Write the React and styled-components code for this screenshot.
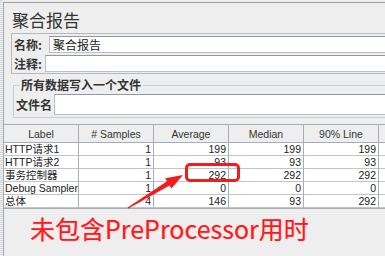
import styled, { createGlobalStyle } from "styled-components";

const GlobalStyle = createGlobalStyle`
  html, body {
    margin: 0;
    padding: 0;
    background: #eeeeee;
    overflow: hidden;
  }
  body {
    font-family: "Liberation Sans", "Noto Sans CJK SC", sans-serif;
  }
`;

const Frame = styled.div`
  position: relative;
  display: flex;
  align-items: flex-start;
  width: 385px;
  height: 256px;
  overflow: hidden;
  background: #eeeeee;
`;

const Splitter = styled.div`
  width: 3px;
  height: 256px;
  flex: none;
  background: repeating-linear-gradient(
    to bottom,
    #d4d6da 0px,
    #d4d6da 1px,
    #f2f2f2 1px,
    #f2f2f2 2px
  );
`;

const Main = styled.div`
  flex: none;
  width: 440px;
  height: 260px;
  border-left: 1px solid #a4a8b0;
  border-top: 1px solid #9aa0a8;
  margin-top: 2px;
`;

const Title = styled.div`
  height: 30px;
  padding-left: 8px;
  font-family: "Noto Sans CJK SC", sans-serif;
  font-size: 17px;
  line-height: 33px;
  color: #333333;
`;

const NameBox = styled.div`
  margin-left: 7px;
  border: 1px solid #b4b8c0;
  padding: 2px 0 1px 2px;
  display: flex;
  flex-direction: column;
  gap: 2px;
`;

const FieldRow = styled.div`
  display: flex;
  align-items: center;
`;

const FieldLabel = styled.span`
  width: ${(p) => p.$w}px;
  flex: none;
  white-space: nowrap;
  font-family: "Noto Sans CJK SC", sans-serif;
  font-size: 12px;
  line-height: 14px;
  font-weight: 700;
  color: #333333;
`;

const TextBox = styled.div`
  flex: 1;
  height: ${(p) => p.$h}px;
  box-sizing: border-box;
  background: #ffffff;
  border: 1px solid #b8c0cc;
  border-top-color: #8e98a6;
  padding-left: 3px;
  font-family: "Noto Sans CJK SC", sans-serif;
  font-size: 12px;
  line-height: ${(p) => p.$h - 2}px;
  color: #222222;
`;

const FileSet = styled.fieldset`
  margin: 4px 0 0 9px;
  padding: 1px 0 2px 2px;
  border: 1px solid #c8ccd4;
  border-right: none;
`;

const Legend = styled.legend`
  padding: 0 2px;
  margin-left: 3px;
  font-family: "Noto Sans CJK SC", sans-serif;
  font-size: 12px;
  font-weight: 700;
  line-height: 14px;
  color: #333333;
`;

const FileRow = styled(FieldRow)`
  margin-top: 1px;
`;

const Table = styled.div`
  margin-top: 6px;
  display: grid;
  grid-template-columns: repeat(6, 75px);
  border-top: 1px solid #a8acb4;
  border-bottom: 1px solid #a8acb4;
  font-size: 10.5px;
  color: #222222;
`;

const HeadCell = styled.div`
  height: 17px;
  line-height: 18px;
  text-align: center;
  background: #eeeeee;
  border-right: 1px solid #a8acb4;
  border-bottom: 1px solid #a8acb4;
  color: #333333;
`;

const Cell = styled.div`
  height: 12px;
  line-height: 13px;
  background: #ffffff;
  border-right: 1px solid #a8acb4;
  border-bottom: 1px solid #c0c4cc;
  padding: 0 2px 0 1px;
  text-align: ${(p) => (p.$num ? "right" : "left")};
  font-family: "Liberation Sans", "Noto Sans CJK SC", sans-serif;
  white-space: nowrap;
  overflow: hidden;
`;

const Note = styled.div`
  margin: 3px 0 0 26px;
  font-family: "Noto Sans CJK SC", sans-serif;
  font-size: 25px;
  line-height: 32px;
  color: #ff1a1a;
  text-shadow: 0 0 1px #ff9ab0;
`;

const Highlight = styled.div`
  position: absolute;
  left: 185px;
  top: 163px;
  width: 55px;
  height: 19px;
  box-sizing: border-box;
  border: 3px solid #f21c1c;
  border-radius: 5px;
`;

const ArrowLayer = styled.svg`
  position: absolute;
  left: 0;
  top: 0;
  pointer-events: none;
`;

const headers = ["Label", "# Samples", "Average", "Median", "90% Line", ""];

const rows = [
  ["HTTP请求1", "1", "199", "199", "199", ""],
  ["HTTP请求2", "1", "93", "93", "93", ""],
  ["事务控制器", "1", "292", "292", "292", ""],
  ["Debug Sampler", "1", "0", "0", "0", ""],
  ["总体", "4", "146", "93", "292", ""],
];

const App = () => {
  return (
    <Frame>
      <GlobalStyle />
      <Splitter />
      <Main>
        <Title>聚合报告</Title>
        <NameBox>
          <FieldRow>
            <FieldLabel $w={35}>名称:</FieldLabel>
            <TextBox $h={17}>聚合报告</TextBox>
          </FieldRow>
          <FieldRow>
            <FieldLabel $w={31}>注释:</FieldLabel>
            <TextBox $h={17} />
          </FieldRow>
        </NameBox>
        <FileSet>
          <Legend>所有数据写入一个文件</Legend>
          <FileRow>
            <FieldLabel $w={38}>文件名</FieldLabel>
            <TextBox $h={21} />
          </FileRow>
        </FileSet>
        <Table>
          {headers.map((h, i) => (
            <HeadCell key={i}>{h}</HeadCell>
          ))}
          {rows.map((r, ri) =>
            r.map((c, ci) => (
              <Cell key={ri + "-" + ci} $num={ci > 0}>
                {c}
              </Cell>
            ))
          )}
        </Table>
        <Note>未包含PreProcessor用时</Note>
      </Main>
      <Highlight />
      <ArrowLayer width="385" height="256" viewBox="0 0 385 256">
        <polygon
          points="127.6,207.4 167,181.3 165.2,178.3 183,175 171.4,188.5 169.6,185.5 128.4,208.6"
          fill="#f21c1c"
        />
      </ArrowLayer>
    </Frame>
  );
};

export default App;
